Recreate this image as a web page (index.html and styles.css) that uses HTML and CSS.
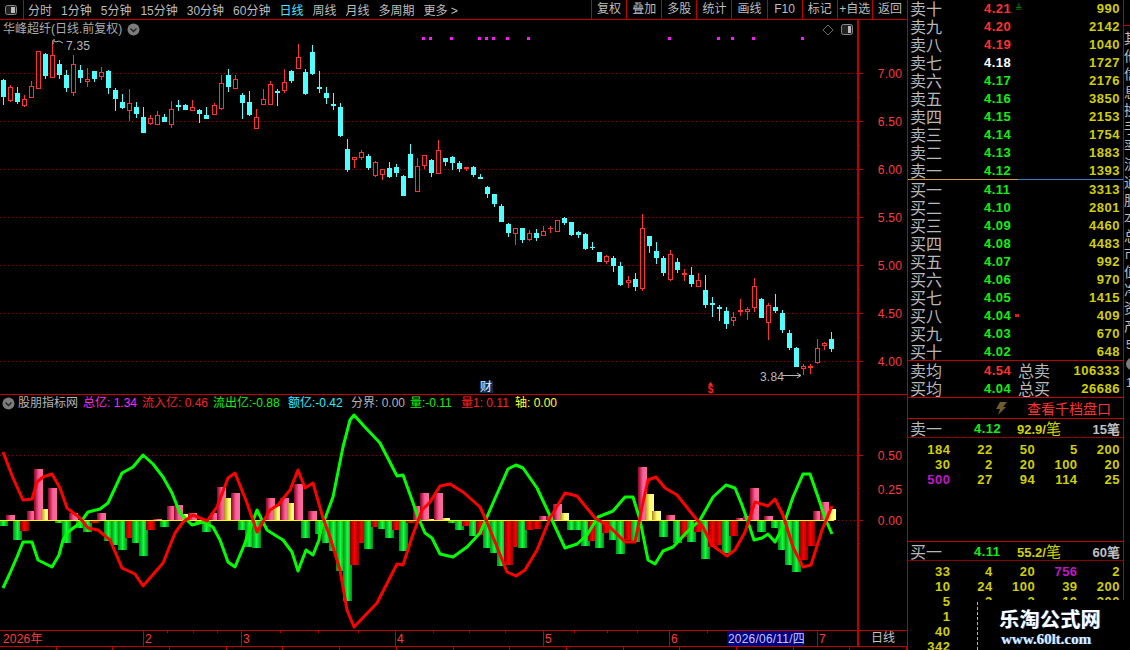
FILE: index.html
```html
<!DOCTYPE html>
<html lang="zh-CN">
<head>
    <meta charset="UTF-8">
    <title>华峰超纤 日线</title>
    <link rel="stylesheet" href="styles.css">
</head>
<body>
    <div class="screen">
        <div class="charts">
            <div class="toolbar">
                <div class="toolbar__toggle">
                    <svg width="12" height="10" viewBox="0 0 12 10"><rect x="0.5" y="0.5" width="11" height="9" rx="2" fill="#222" stroke="#888"/><rect x="6" y="2" width="4" height="6" fill="#bbb"/></svg>
                </div>
                <div class="toolbar__tabs">
                    <span>分时</span><span>1分钟</span><span>5分钟</span><span>15分钟</span><span>30分钟</span><span>60分钟</span>
                    <span class="toolbar__tab--active">日线</span><span>周线</span><span>月线</span><span>多周期</span><span>更多 &gt;</span>
                </div>
                <div class="toolbar__actions">
                    <span>复权</span><span>叠加</span><span>多股</span><span>统计</span><span>画线</span><span>F10</span><span>标记</span><span>+自选</span><span>返回</span>
                </div>
            </div>

            <div class="chart chart--main">
                <svg id="mainChart" width="907" height="374" viewBox="0 20 907 374"></svg>
                <div class="chart__head">
                    <span>华峰超纤(日线.前复权)</span>
                    <svg class="chevron" width="13" height="13" viewBox="0 0 13 13"><circle cx="6.5" cy="6.5" r="6" fill="#7c7c7c"/><path d="M3.5 5.5l3 3 3-3" fill="none" stroke="#222" stroke-width="1.4"/></svg>
                </div>
            </div>

            <div class="chart chart--sub">
                <svg id="subChart" width="907" height="235" viewBox="0 395 907 235"></svg>
                <div class="legend">
                    <svg class="chevron" width="13" height="13" viewBox="0 0 13 13"><circle cx="6.5" cy="6.5" r="6" fill="#7c7c7c"/><path d="M3.5 5.5l3 3 3-3" fill="none" stroke="#222" stroke-width="1.4"/></svg>
                    <span class="legend__name">股朋指标网</span>
                    <span class="legend--magenta legend__w59">总亿: 1.34</span>
                    <span class="legend--red legend__w71">流入亿: 0.46</span>
                    <span class="legend--green legend__w75">流出亿:-0.88</span>
                    <span class="legend--cyan legend__w63">额亿:-0.42</span>
                    <span class="legend--grey legend__w59">分界: 0.00</span>
                    <span class="legend--green legend__w51">量:-0.11</span>
                    <span class="legend--red legend__w54">量1: 0.11</span>
                    <span class="legend--yellow">轴: 0.00</span>
                </div>
            </div>

            <div class="timeline">
                <svg id="timeAxis" width="857" height="15" viewBox="0 631 857 15"></svg>
                <div class="timeline__period">日线</div>
            </div>
            <div class="statusbar">
                <i></i><i></i><i></i><i></i><i></i><i></i><i></i><i></i><i></i><i></i><i></i><i></i><i></i><i></i><i></i><i></i>
            </div>
        </div>

        <div class="panel">
            <div class="quotes quotes--sell">
                <div class="quote"><b>卖十</b><em class="up">4.21</em><s class="mark mark--arrow">≜</s><u>990</u></div>
                <div class="quote"><b>卖九</b><em class="up">4.20</em><u>2142</u></div>
                <div class="quote"><b>卖八</b><em class="up">4.19</em><u>1040</u></div>
                <div class="quote"><b>卖七</b><em class="flat">4.18</em><u>1727</u></div>
                <div class="quote"><b>卖六</b><em>4.17</em><u>2176</u></div>
                <div class="quote"><b>卖五</b><em>4.16</em><u>3850</u></div>
                <div class="quote"><b>卖四</b><em>4.15</em><u>2153</u></div>
                <div class="quote"><b>卖三</b><em>4.14</em><u>1754</u></div>
                <div class="quote"><b>卖二</b><em>4.13</em><u>1883</u></div>
                <div class="quote"><b>卖一</b><em>4.12</em><u>1393</u></div>
            </div>
            <div class="quotes quotes--buy">
                <div class="quote"><b>买一</b><em>4.11</em><u>3313</u></div>
                <div class="quote"><b>买二</b><em>4.10</em><u>2801</u></div>
                <div class="quote"><b>买三</b><em>4.09</em><u>4460</u></div>
                <div class="quote"><b>买四</b><em>4.08</em><u>4483</u></div>
                <div class="quote"><b>买五</b><em>4.07</em><u>992</u></div>
                <div class="quote"><b>买六</b><em>4.06</em><u>970</u></div>
                <div class="quote"><b>买七</b><em>4.05</em><u>1415</u></div>
                <div class="quote"><b>买八</b><em>4.04</em><s class="mark mark--dot"></s><u>409</u></div>
                <div class="quote"><b>买九</b><em>4.03</em><u>670</u></div>
                <div class="quote"><b>买十</b><em>4.02</em><u>648</u></div>
            </div>
            <div class="totals">
                <div class="quote"><b>卖均</b><em class="up">4.54</em><b class="quote__sub">总卖</b><u>106333</u></div>
                <div class="quote"><b>买均</b><em>4.04</em><b class="quote__sub">总买</b><u>26686</u></div>
            </div>
            <div class="depth-link">
                <svg width="11" height="13" viewBox="0 0 11 13"><path d="M4 0h7L7 5h3L2 13l2-6H0z" fill="#6e5c2c"/></svg>
                <span>查看千档盘口</span>
            </div>
            <div class="book book--sell">
                <div class="book__head"><b>卖一</b><em>4.12</em><span class="book__avg">92.9/<i>笔</i></span><span class="book__count">15笔</span></div>
                <div class="book__grid">
                    <span>184</span><span>22</span><span>50</span><span>5</span><span>200</span>
                    <span>30</span><span>2</span><span>20</span><span>100</span><span>20</span>
                    <span class="big">500</span><span>27</span><span>94</span><span>114</span><span>25</span>
                </div>
            </div>
            <div class="book book--buy">
                <div class="book__head"><b>买一</b><em>4.11</em><span class="book__avg">55.2/<i>笔</i></span><span class="book__count">60笔</span></div>
                <div class="book__grid">
                    <span>33</span><span>4</span><span>20</span><span class="big">756</span><span>2</span>
                    <span>10</span><span>24</span><span>100</span><span>39</span><span>200</span>
                    <span>5</span><span>3</span><span>3</span><span>10</span><span>300</span>
                    <span>1</span><span></span><span></span><span></span><span></span>
                    <span>40</span><span></span><span></span><span></span><span></span>
                    <span>342</span><span></span><span></span><span></span><span></span>
                </div>
            </div>
        </div>

        <div class="peek">
            <div class="peek__text">其他信息换手率流通股本总市值净资产每股收益市盈</div>
            <div class="peek__foot"><span>5</span><svg width="12" height="12" viewBox="0 0 12 12"><circle cx="6" cy="6" r="6" fill="#7c7c7c"/></svg><span>1</span></div>
        </div>

        <div class="watermark">
            <div class="watermark__name">乐淘公式网</div>
            <div class="watermark__url">www.60lt.com</div>
        </div>
    </div>
    <script src="script.js"></script>
</body>
</html>
```

FILE: styles.css
```css
* {
    box-sizing: border-box;
    margin: 0;
    padding: 0;
}

html, body {
    background: #000;
    overflow: hidden;
}

body {
    font-family: "Liberation Sans", "Noto Sans CJK SC", sans-serif;
    font-size: 12px;
    color: #bdbdbd;
}

*, html {
    --line: #c00000;
    --green: #10f010;
    --red: #ff3030;
    --vol: #d0d000;
}

svg {
    display: block;
}

/* LAYOUT
=============== */
.screen {
    position: relative;
    display: flex;
    width: 1130px;
    height: 650px;
    overflow: hidden;
}

.charts {
    flex: 0 0 907px;
    display: flex;
    flex-direction: column;
}

/* TOOLBAR */
.toolbar {
    display: flex;
    align-items: center;
    flex: 0 0 20px;
    border-bottom: 1px solid var(--line);
    white-space: nowrap;
}

.toolbar__toggle {
    flex: 0 0 24px;
    height: 19px;
    padding: 5px 0 0 5px;
    border-right: 1px solid var(--line);
}

.toolbar__tabs {
    display: flex;
    gap: 9px;
    padding-left: 4px;
}

.toolbar__tab--active {
    color: #4ce8ff;
}

.toolbar__actions {
    display: grid;
    grid-template-columns: repeat(9, 1fr);
    width: 316px;
    height: 19px;
    margin-left: auto;
}

.toolbar__actions span {
    border-left: 1px solid var(--line);
    line-height: 19px;
    text-align: center;
}

/* CHARTS */
.chart {
    position: relative;
    border-bottom: 1px solid var(--line);
}

.chart--main {
    flex: 0 0 375px;
}

.chart--sub {
    flex: 0 0 236px;
}

.chart__head {
    position: absolute;
    top: 1px;
    left: 3px;
    display: flex;
    align-items: center;
    gap: 5px;
    line-height: 17px;
    color: #ababab;
}

.chevron {
    flex: none;
}

.legend {
    position: absolute;
    top: 0;
    left: 2px;
    display: flex;
    align-items: center;
    line-height: 17px;
    white-space: nowrap;
}

.legend__name {
    flex: 0 0 65px;
    margin-left: 3px;
    color: #b4b4b4;
}

.legend__w51 { flex: 0 0 51px; }
.legend__w54 { flex: 0 0 54px; }
.legend__w59 { flex: 0 0 59px; }
.legend__w63 { flex: 0 0 63px; }
.legend__w71 { flex: 0 0 71px; }
.legend__w75 { flex: 0 0 75px; }

.legend--magenta { color: #ff28ff; }
.legend--red { color: #ff2020; }
.legend--green { color: #10f010; }
.legend--cyan { color: #28f0ff; }
.legend--grey { color: #b4b4b4; }
.legend--yellow { color: #ffff30; }

.axis {
    font-size: 12px;
    letter-spacing: 0.2px;
}

.badge {
    font-size: 12px;
}

.dollar {
    font-size: 10px;
    font-weight: 700;
}

/* TIME AXIS */
.timeline {
    display: flex;
    flex: 0 0 16px;
    border-bottom: 1px solid var(--line);
}

.timeline__period {
    flex: 1;
    border-left: 2px solid var(--line);
    line-height: 15px;
    text-align: center;
    color: #c4c4c4;
}

.statusbar {
    display: flex;
    flex: 1;
}

.statusbar i {
    flex: 1;
    border-right: 1px solid var(--line);
}

/* QUOTE PANEL */
.panel {
    flex: 0 0 217px;
    margin-top: -1px;
    border-left: 1px solid var(--line);
    border-right: 1px solid var(--line);
    height: 655px;
}

.quotes--sell {
    border-bottom: 1px solid;
    border-image: linear-gradient(to right, #d9983c 51%, #3d7fc4 51%) 1;
}

.quote {
    display: flex;
    align-items: center;
    height: 18px;
    padding: 0 3px 0 2px;
}

.quote b {
    flex: 0 0 74px;
    font-weight: 400;
    font-size: 16px;
    color: #b8b8b8;
}

.quote em, .book__head em, .quote u, .book__grid, .book__avg {
    font-family: "Liberation Sans", sans-serif;
    font-size: 13px;
    font-weight: 700;
    letter-spacing: 0.5px;
}

.quote em, .book__head em {
    font-style: normal;
    color: var(--green);
}

.quote em {
    flex: 0 0 31px;
}

.quote em.up {
    color: var(--red);
}

.quote em.flat {
    color: #fff;
}

.quote u {
    margin-left: auto;
    text-decoration: none;
    color: var(--vol);
}

.mark--arrow {
    font-size: 9px;
    line-height: 10px;
    text-decoration: none;
    color: #0a8a0a;
}

.mark--dot {
    width: 4px;
    height: 3px;
    background: #e01818;
}

.quote .quote__sub {
    flex: 0 0 52px;
    margin-left: 3px;
}

.totals {
    border-top: 1px solid var(--line);
    border-bottom: 1px solid var(--line);
}

.depth-link {
    display: flex;
    align-items: center;
    height: 21px;
    padding-left: 88px;
    gap: 20px;
    border-bottom: 1px solid var(--line);
    font-size: 14px;
    color: #ff3030;
}

.book {
    height: 123px;
    border-bottom: 1px solid var(--line);
}

.book--buy {
    height: auto;
    border-bottom: 0;
}

.book__head {
    display: flex;
    align-items: center;
    height: 19px;
    padding: 0 3px 0 2px;
    border-bottom: 1px dotted #a00000;
}

.book__head b {
    flex: 0 0 64px;
    font-size: 16px;
    font-weight: 400;
    color: #b8b8b8;
}

.book__head em {
    flex: 0 0 43px;
}

.book__avg {
    color: var(--vol);
    letter-spacing: 0;
}

.book__avg i {
    font-family: "Noto Sans CJK SC", sans-serif;
    font-size: 15px;
    font-weight: 400;
    font-style: normal;
    line-height: 15px;
}

.book__count {
    margin-left: auto;
    font-size: 13px;
    font-weight: 700;
    color: #c0c0c0;
}

.book__grid {
    display: grid;
    grid-template-columns: repeat(5, 42.4px);
    padding: 3px 3px 0 0;
    justify-content: end;
    color: var(--vol);
    line-height: 15px;
    text-align: right;
}

.book--sell .book__grid {
    padding-top: 4px;
}

.book__grid span {
    height: 15px;
}

.book__grid .big {
    color: #c018c8;
}

/* CUT OFF COLUMN */
.peek {
    flex: 1;
    overflow: hidden;
    padding-top: 25px;
}

.peek__text {
    width: 14px;
    height: 310px;
    padding-top: 3px;
    border-top: 1px solid var(--line);
    line-height: 18px;
    word-break: break-all;
    white-space: normal;
    font-size: 14px;
    overflow: hidden;
}

.peek__foot {
    display: flex;
    flex-direction: column;
    gap: 6px;
    width: 14px;
    margin: 3px 0 0 2px;
}

/* WATERMARK - sits on top of the book */
.watermark {
    position: absolute;
    top: 600px;
    left: 955px;
    right: 0;
    bottom: 0;
    padding-left: 44px;
    background: #000;
    color: #fff;
}

.watermark::before {
    content: "";
    position: absolute;
    top: 2px;
    bottom: 0;
    left: 22px;
    border-left: 1px dashed #c8c800;
}

.watermark__name {
    margin-top: 8px;
    font-family: "Noto Sans CJK SC", sans-serif;
    font-size: 20px;
    line-height: 22px;
    font-weight: 700;
    letter-spacing: 0.4px;
    text-shadow: 1px 0 #3a6fc0;
}

.watermark__url {
    margin: 1px 0 0 2px;
    font-family: "Liberation Serif", serif;
    font-size: 15px;
    line-height: 17px;
    font-weight: 700;
    color: #dfeeff;
    text-shadow: 1px 0 #2a62c0;
}
```

FILE: script.js
```js
const NS = 'http://www.w3.org/2000/svg';
const LINE = '#c00000';
const DOT = '#8c0000';
const AXIS = '#ff3a3a';

function el(parent, name, attrs, text) {
    const node = document.createElementNS(NS, name);
    for (const k in attrs) node.setAttribute(k, attrs[k]);
    if (text !== undefined) node.textContent = text;
    parent.appendChild(node);
    return node;
}

// pixel column of candle i, same for the bars below
const colX = i => Math.floor(3.5 + 7.017 * i);

// candles as [up?, high, top, bottom, low], traced per chart section at 3x
const sections = [
    { y0: 30, rows: [
        [0,148,150,200,225],[1,165,172,213,215],[0,170,189,216,222],[1,195,207,227,232],[1,153,168,203,203],
        [1,64,64,176,176],[0,68,72,138,148],[1,33,76,143,143],[0,90,102,135,147],[0,120,135,174,187],
        [1,75,103,188,197],[0,105,120,144,158],[1,114,148,155,170],[0,122,124,147,155],[1,111,127,140,150],
        [0,120,124,173,192],[0,175,180,207,243],[0,192,216,234,237],[1,177,220,242,274],[0,216,231,252,264],
        [0,232,261,308,308],[1,255,265,281,285],[1,243,256,284,285],[0,253,262,276,277],[1,213,238,285,295],
        [0,210,225,231,244],[0,222,226,239,240],[1,210,232,242,243],[0,236,240,251,278],[0,232,255,267,267],
        [1,220,226,254,255],[1,135,160,236,240],[0,117,135,171,186],[1,135,148,176,178],[0,190,195,218,267],
        [0,183,216,255,258],[1,237,262,296,296],[1,177,208,224,224],[1,153,163,224,225],[0,178,184,188,228],
        [1,117,157,182,188],[0,120,123,152,158],[1,42,82,116,118],[0,118,126,191,194],[0,45,67,131,134],
        [0,123,172,176,188],[0,171,190,204,222],[0,190,222,228,239],[0,220,232,318,320]
    ] },
    { y0: 120, rows: [
        [0,57,87,150,155],[1,112,112,119,145],[1,90,97,113,119],[0,103,108,144,149],[1,122,127,169,172],
        [1,148,148,164,180],[0,126,144,171,174],[0,132,141,159,170],[0,166,168,228,228],[0,72,102,174,174],
        [1,114,139,215,216],[1,106,106,137,147],[0,118,121,159,171],[1,60,91,161,161],[0,114,114,126,138],
        [0,109,111,129,150],[0,124,129,147,155],[1,141,141,147,153],[0,138,141,165,171],[0,162,172,177,177],
        [0,198,201,222,234],[0,222,222,252,261],[0,252,258,306,306],[0,309,312,339,351],[1,324,324,342,375],
        [0,324,324,360,369],[1,331,339,360,363],[0,327,339,354,363],[1,318,333,348,348],[1,318,324,328,339],
        [1,300,300,336,336],[0,291,294,309,315],[0,306,306,345,348],[0,333,336,345,354],[0,339,342,387,390],
        [0,366,381,385,390]
    ] },
    { y0: 200, rows: [
        [0,156,156,186,186],[1,165,169,186,192],[0,168,174,198,216],[0,186,198,255,258],[1,228,240,248,264],
        [0,219,237,261,273],[1,42,85,267,273],[0,108,108,138,159],[0,126,153,174,192],[0,168,174,219,228],
        [1,150,163,240,243],[0,175,186,210,219],[1,207,219,224,243],[0,201,225,252,261],[1,219,240,261,261],
        [0,225,270,315,324],[0,291,309,315,351],[0,315,321,327,363],[0,321,333,372,387],[1,336,351,362,378],
        [1,297,330,336,348],[1,321,327,336,360],[1,234,258,324,336],[0,294,297,354,354],[1,309,315,369,420],
        [0,282,321,333,339],[0,330,339,390,399],[0,390,399,444,450],[0,441,444,501,501],[1,492,498,507,525],
        [1,492,498,504,522],[1,417,444,489,492],[1,426,429,438,450],[0,396,417,447,456]
    ] }
];

const bars = ['g5','p5','g19','r10','p9','p51','y11','p32','g2','g22','p7','g7','g11','r2','p7','g20','g24','g29','r17','g22',
    'g35','r9','p1','g6','p14','p15','y6','p7','g2','g11','p7','p33','y22','p27','g9','g26','g27','p0','p22','y14',
    'p22','y17','p36','g17','p9','g13','g22','g30','g50','g80','r44','r22','g28','r6','g8','g17','r9','g30','r2','p14',
    'p27','y1','p27','y2','g2','g9','r5','g15','r14','g27','g32','g45','r44','r26','g27','r9','r8','p4','p4','p16',
    'y7','g9','g9','g25','r20','g27','r12','g19','g33','r19','g21','p53','y26','y9','g16','p5','g22','r16','g21','r11',
    'g38','r26','r24','g32','r15','p2','p4','p32','g11','p4','g7','g29','g44','g51','r39','r25','p9','p18','y11'];

const greenLine = '3,588 10,573 17,557 23,542 32,542 38,560 52,567 59,555 63,540 68,532 80,523 88,512 100,509 108,503 122,473 133,467 143,455 153,464 163,477 172,493 180,513 192,525 203,522 213,527 220,540 228,562 235,567 245,543 247,537 257,510 267,530 278,537 283,540 292,552 298,571 306,550 313,555 319,540 320,532 333,497 343,447 350,420 354,415 363,425 380,443 397,476 403,475 412,500 418,517 425,533 432,538 440,554 453,557 467,547 480,533 493,503 508,469 516,465 523,468 537,488 552,520 565,548 577,544 587,535 598,517 613,511 625,497 633,497 640,520 648,560 655,564 663,551 673,547 687,532 700,520 713,497 726,485 735,488 742,505 748,522 754,540 762,538 768,534 775,542 783,527 793,497 803,474 810,474 818,497 825,518 832,534';
const redLine = '3,452 13,478 23,500 32,499 37,482 43,477 52,474 60,488 67,508 80,518 88,528 98,530 110,540 122,568 135,574 143,586 163,563 175,533 183,522 193,515 207,521 217,507 228,478 235,473 247,503 257,532 270,510 278,505 290,490 298,470 305,488 313,483 323,518 330,537 340,570 347,610 354,627 377,603 397,564 403,565 412,537 422,510 430,502 440,486 450,484 463,492 480,507 487,522 497,547 507,572 516,576 525,570 537,550 550,518 565,493 577,496 595,518 610,527 625,542 635,542 642,507 648,480 656,477 665,488 677,495 693,515 703,527 712,545 727,556 735,550 745,532 755,502 768,506 775,499 783,515 793,547 803,567 811,565 822,530 832,506';

function drawAxis(svg, top, bottom, labels, ticks) {
    el(svg, 'rect', { x: 857, y: top, width: 2, height: bottom - top, fill: LINE });
    ticks.forEach(t => el(svg, 'rect', { x: 857, y: t[0], width: t[1], height: 1, fill: LINE }));
    labels.forEach(l => el(svg, 'text', { x: 902, y: l[1] + 5, 'text-anchor': 'end', fill: AXIS, class: 'axis' }, l[0]));
}

function drawMain() {
    const svg = document.getElementById('mainChart');
    const labels = [['7.00',73],['6.50',121],['6.00',169],['5.50',217],['5.00',265],['4.50',313],['4.00',361]];

    labels.forEach(l => el(svg, 'line', { x1: 0, x2: 857, y1: l[1] + .5, y2: l[1] + .5, stroke: DOT, 'stroke-dasharray': '1 3' }));

    const ticks = [];
    labels.forEach(l => { ticks.push([l[1], 6]); ticks.push([l[1] + 24, 3]); });
    drawAxis(svg, 20, 394, labels, ticks);

    [423,430,451,479,486,493,507,528,669,718,732,753,802].forEach(x =>
        el(svg, 'rect', { x: x - 1, y: 37, width: 3, height: 3, fill: '#ff18ff' }));

    let i = 0;
    sections.forEach(s => s.rows.forEach(r => {
        const x = colX(i++);
        const y = v => Math.round(s.y0 + v / 3);
        const color = r[0] ? '#ff3232' : '#50ffff';
        el(svg, 'rect', { x: x, y: y(r[1]), width: 1, height: Math.max(1, y(r[4]) - y(r[1])), fill: color });
        const h = y(r[3]) - y(r[2]);
        if (r[0] && h > 2) {
            el(svg, 'rect', { x: x - 1.5, y: y(r[2]) + .5, width: 4, height: h - 1, fill: '#000', stroke: color });
        } else {
            el(svg, 'rect', { x: x - 2, y: y(r[2]), width: 5, height: Math.max(1, h), fill: color });
        }
    }));

    // high / low notes
    el(svg, 'path', { d: 'M53 44V40h2M54 41l2 1 3-1 4 2', fill: 'none', stroke: '#b8b8b8' });
    el(svg, 'text', { x: 66, y: 50, fill: '#b8b8b8', class: 'axis' }, '7.35');
    el(svg, 'text', { x: 760, y: 381, fill: '#b8b8b8', class: 'axis' }, '3.84');
    el(svg, 'path', { d: 'M782 375.5H801M797 373l4 2.5-4 2.5', fill: 'none', stroke: '#b8b8b8' });

    // panel buttons, top right of the plot
    el(svg, 'path', { d: 'M828 25l5 5-5 5-5-5z', fill: 'none', stroke: '#666' });
    el(svg, 'rect', { x: 841.5, y: 24.5, width: 11, height: 10, rx: 2, fill: '#222', stroke: '#888' });
    el(svg, 'rect', { x: 848, y: 26, width: 3, height: 7, fill: '#bbb' });

    // event marks on the date line
    el(svg, 'rect', { x: 480, y: 381, width: 13, height: 12, fill: '#0a2c52' });
    el(svg, 'text', { x: 480, y: 391, fill: '#e8f0ff', class: 'badge' }, '财');
    el(svg, 'path', { d: 'M710.5 382l2.5 3h-5z', fill: '#ff2020' });
    el(svg, 'text', { x: 710.5, y: 392.5, fill: '#ff2020', 'text-anchor': 'middle', class: 'dollar' }, '$');
}

function addGradient(defs, id, stops) {
    const g = el(defs, 'linearGradient', { id: id, x1: 0, x2: 1, y1: 0, y2: 0 });
    stops.forEach(s => el(g, 'stop', { offset: s[0], 'stop-color': s[1] }));
}

function drawSub() {
    const svg = document.getElementById('subChart');
    const defs = el(svg, 'defs', {});
    addGradient(defs, 'barg', [[0, '#008a10'], [.5, '#10ff40'], [1, '#008a10']]);
    addGradient(defs, 'barr', [[0, '#7a0000'], [.5, '#ff0000'], [1, '#a00000']]);
    addGradient(defs, 'barp', [[0, '#8a0020'], [.55, '#ff5f98'], [1, '#ff6aa0']]);
    addGradient(defs, 'bary', [[0, '#b08820'], [.55, '#ffff70'], [1, '#ffff90']]);

    const zero = 520;
    el(svg, 'line', { x1: 0, x2: 857, y1: 455.5, y2: 455.5, stroke: DOT, 'stroke-dasharray': '1 3' });
    el(svg, 'line', { x1: 834, x2: 857, y1: zero + .5, y2: zero + .5, stroke: DOT, 'stroke-dasharray': '1 3' });

    drawAxis(svg, 395, 630,
        [['0.50',455],['0.25',489],['0.00',520]],
        [[419,3],[455,6],[488,3],[520,6],[543,3]]);

    bars.forEach((b, i) => {
        const h = +b.slice(1);
        if (!h) return;
        const up = b[0] === 'p' || b[0] === 'y';
        el(svg, 'rect', { x: colX(i) - 4, y: up ? zero - h : zero + 1, width: 9, height: h, fill: 'url(#bar' + b[0] + ')', 'shape-rendering': 'crispEdges' });
    });

    el(svg, 'rect', { x: 0, y: zero, width: 834, height: 1, fill: '#ffff00' });
    el(svg, 'polyline', { points: greenLine, fill: 'none', stroke: '#00ff00', 'stroke-width': 3, 'stroke-linejoin': 'round' });
    el(svg, 'polyline', { points: redLine, fill: 'none', stroke: '#ff0000', 'stroke-width': 3, 'stroke-linejoin': 'round' });
}

function drawTime() {
    const svg = document.getElementById('timeAxis');
    [167,193,217,280,318,358,433,469,505,574,607,637,707].forEach(x =>
        el(svg, 'rect', { x: x, y: 631, width: 1, height: 2, fill: LINE }));
    [[143,'2'],[241,'3'],[395,'4'],[543,'5'],[669,'6'],[817,'7']].forEach(t => {
        el(svg, 'rect', { x: t[0], y: 631, width: 1, height: 15, fill: LINE });
        el(svg, 'text', { x: t[0] + 2, y: 643, fill: AXIS, class: 'axis' }, t[1]);
    });
    el(svg, 'text', { x: 3, y: 643, fill: AXIS, class: 'axis' }, '2026年');
    el(svg, 'rect', { x: 727, y: 631, width: 77, height: 15, fill: '#000080' });
    el(svg, 'text', { x: 728, y: 643, fill: '#c8c8ff', class: 'axis' }, '2026/06/11/四');
}

drawMain();
drawSub();
drawTime();
```
